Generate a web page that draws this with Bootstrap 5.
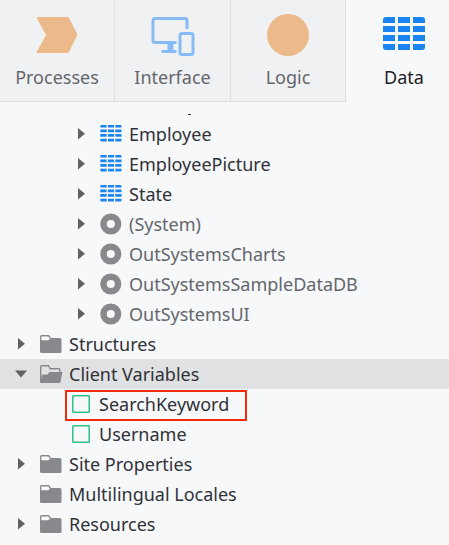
<!DOCTYPE html>
<html lang="en">
<head>
<meta charset="utf-8">
<meta name="viewport" content="width=device-width, initial-scale=1">
<title>Data tree</title>
<link href="https://cdn.jsdelivr.net/npm/bootstrap@5.3.0/dist/css/bootstrap.min.css" rel="stylesheet">
<style>
body{background:#f7f8fa;font-family:"Noto Sans",sans-serif;font-size:18px;color:#303237;height:545px}
.tabs{height:102px}
.tab-item{flex:none;width:116px;height:102px;background:#f0f1f3;border-right:1px solid #dee0e3;border-bottom:1px solid #dee0e3;color:#64666b;line-height:24px}
.tab-item:first-child{width:115px}
.tab-item:nth-child(3){width:115px}
.tab-item.current{background:transparent;border-color:transparent;color:#1d1f23;width:117px}
.tab-item svg{width:46px;height:46px;margin-top:12px;display:block}
.tab-item span{margin-top:7px}
.tree{padding-top:12px}
.tail{width:3px;height:1px;background:#26282c;margin:0 0 4px 188px}
.node{height:30px;line-height:30px;white-space:nowrap}
.node.lv2{padding-left:60px}
.node.ext{color:#64666b}
.node.selected{background:#e0e1e3}
.arrow{width:16px;height:16px;margin-left:14px;flex:none}
.glyph{width:24px;height:24px;margin:0 6px 0 9px;flex:none}
.leaf{padding-left:65px}
.leaf .inner{width:182px;height:31px;margin-top:1px;flex:none;border:2px solid transparent;padding-left:5px;line-height:27px}
.leaf .inner.marked{border-color:#f42a0b}
.leaf .inner span{margin-top:-2px}
.box{width:18px;height:18px;margin:-3px 9px 0 0;flex:none}
</style>
<script src="https://cdn.jsdelivr.net/npm/bootstrap@5.3.0/dist/js/bootstrap.bundle.min.js"></script>
</head>
<body class="overflow-hidden">
<svg class="d-none">
<symbol id="right" viewBox="0 0 16 16"><path d="M4 2 11 7.800 4 13.600Z" fill="#5f6165"/></symbol>
<symbol id="down" viewBox="0 0 16 16"><path d="M1 4.5H13L7 11.5Z" fill="#5f6165"/></symbol>
<symbol id="grid" viewBox="0 0 24 24"><path d="M2.300 3H7.700V5.600H1.300V4Q1.300 3 2.300 3M9 3h6v2.600H9zM16.300 3h5.200Q22.500 3 22.500 4v1.600H16.300zM1.300 7.600h6.400v2.600H1.300zM9 7.600h6v2.600H9zM16.300 7.600h6.200v2.600H16.300zM1.300 12.100h6.400v2.600H1.300zM9 12.100h6v2.600H9zM16.300 12.100h6.200v2.600H16.300zM1.300 16.700h6.400v2.700H2.300Q1.300 19.400 1.300 18.400zM9 16.700h6v2.700H9zM16.300 16.700h6.200v1.700Q22.500 19.400 21.500 19.400h-5.200z" fill="#1a84f0"/></symbol>
<symbol id="ring" viewBox="0 0 24 24"><circle cx="11.8" cy="12" r="7.3" fill="none" stroke="#88898d" stroke-width="6.500"/></symbol>
<symbol id="folder" viewBox="0 0 24 24"><path d="M2.5 3H10l2 3h9Q22.5 6 22.5 7.5v12Q22.5 21 21 21H2.5Q1 21 1 19.500V4.500Q1 3 2.500 3" fill="#88898d"/><path d="M2.300 4.400H9.300L11 7 9 8.300H2.300Z" fill="#f7f8fa"/></symbol>
<symbol id="open" viewBox="0 0 24 24"><path d="M1.700 20V4.500Q1.700 3.700 2.500 3.700H9.500L11.300 6.700H20Q20.800 6.700 20.800 7.500V11" fill="none" stroke="#88898d" stroke-width="1.400"/><path d="M10.500 10H23.500L21.500 20Q21.300 21 20.300 21H2Q1 21 1.300 20L3.300 12.500H8.500Z" fill="#88898d"/></symbol>
<symbol id="square" viewBox="0 0 18 18"><rect x=".8" y=".8" width="16.400" height="16.400" rx=".5" fill="none" stroke="#2fc088" stroke-width="1.500"/></symbol>
</svg>
<nav class="tabs d-flex">
<div class="tab-item d-flex flex-column align-items-center"><svg viewBox="0 0 46 46"><path d="M3.500 5H33.500Q34.500 5 35 6L43.500 22.500 35 40Q34.500 41 33.500 41H3.500Q2 41 3 39.500L12 23 3 6.500Q2 5 3.500 5" fill="#ecb98b"/></svg><span>Processes</span></div>
<div class="tab-item d-flex flex-column align-items-center"><svg viewBox="0 0 46 46"><g transform="translate(.5 0)"><g fill="none" stroke="#86bbf3" stroke-width="3"><path d="M26 30.500H4.500Q2.500 30.500 2.500 28.500V8.500Q2.500 6.500 4.500 6.500H34.500Q36.500 6.500 36.500 8.500V17M11 39.500H26"/><rect x="29.500" y="21.500" width="13" height="21" rx="2"/></g><path d="M17 31h6v9h-6z" fill="#86bbf3"/></g></svg><span>Interface</span></div>
<div class="tab-item d-flex flex-column align-items-center"><svg viewBox="0 0 46 46"><circle cx="23" cy="23" r="21" fill="#ecb98b"/></svg><span>Logic</span></div>
<div class="tab-item current d-flex flex-column align-items-center"><svg viewBox="0 0 46 46"><path d="M5 5h9v6H2V8Q2 5 5 5M17 5h12v6H17zM32 5h9q3 0 3 3v3H32zM2 14h12v6H2zM17 14h12v6H17zM32 14h12v6H32zM2 23h12v6H2zM17 23h12v6H17zM32 23h12v6H32zM2 32h12v6H5q-3 0-3-3zM17 32h12v6H17zM32 32h12v3q0 3-3 3h-9z" fill="#1a84f0"/></svg><span>Data</span></div>
</nav>
<main class="tree">
<div class="tail"></div>
<div class="node lv2 d-flex align-items-center"><svg class="arrow"><use href="#right"/></svg><svg class="glyph"><use href="#grid"/></svg><span>Employee</span></div>
<div class="node lv2 d-flex align-items-center"><svg class="arrow"><use href="#right"/></svg><svg class="glyph"><use href="#grid"/></svg><span>EmployeePicture</span></div>
<div class="node lv2 d-flex align-items-center"><svg class="arrow"><use href="#right"/></svg><svg class="glyph"><use href="#grid"/></svg><span>State</span></div>
<div class="node lv2 ext d-flex align-items-center"><svg class="arrow"><use href="#right"/></svg><svg class="glyph"><use href="#ring"/></svg><span>(System)</span></div>
<div class="node lv2 ext d-flex align-items-center"><svg class="arrow"><use href="#right"/></svg><svg class="glyph"><use href="#ring"/></svg><span>OutSystemsCharts</span></div>
<div class="node lv2 ext d-flex align-items-center"><svg class="arrow"><use href="#right"/></svg><svg class="glyph"><use href="#ring"/></svg><span>OutSystemsSampleDataDB</span></div>
<div class="node lv2 ext d-flex align-items-center"><svg class="arrow"><use href="#right"/></svg><svg class="glyph"><use href="#ring"/></svg><span>OutSystemsUI</span></div>
<div class="node d-flex align-items-center"><svg class="arrow"><use href="#right"/></svg><svg class="glyph"><use href="#folder"/></svg><span>Structures</span></div>
<div class="node selected d-flex align-items-center"><svg class="arrow"><use href="#down"/></svg><svg class="glyph"><use href="#open"/></svg><span>Client Variables</span></div>
<div class="node leaf d-flex align-items-start"><div class="inner marked d-flex align-items-center"><svg class="box"><use href="#square"/></svg><span>SearchKeyword</span></div></div>
<div class="node leaf d-flex align-items-start"><div class="inner d-flex align-items-center"><svg class="box"><use href="#square"/></svg><span>Username</span></div></div>
<div class="node d-flex align-items-center"><svg class="arrow"><use href="#right"/></svg><svg class="glyph"><use href="#folder"/></svg><span>Site Properties</span></div>
<div class="node d-flex align-items-center"><svg class="arrow"></svg><svg class="glyph"><use href="#folder"/></svg><span>Multilingual Locales</span></div>
<div class="node d-flex align-items-center"><svg class="arrow"><use href="#right"/></svg><svg class="glyph"><use href="#folder"/></svg><span>Resources</span></div>
</main>
</body>
</html>
